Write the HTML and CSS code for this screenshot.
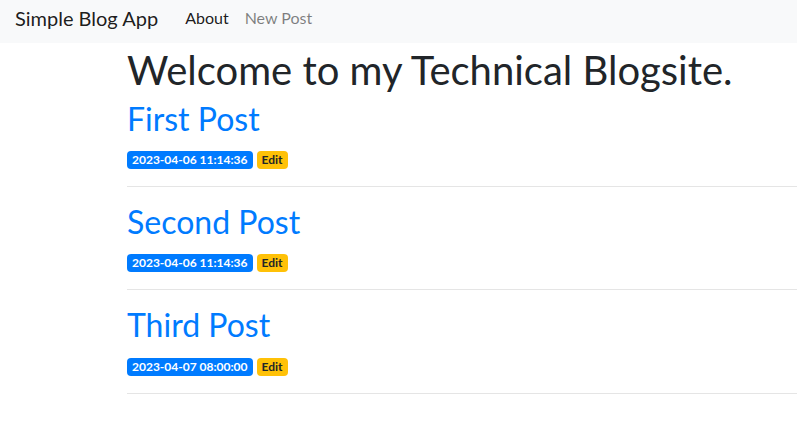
FILE: index.html
```html
<!DOCTYPE html>
<html lang="en">
<head>
<meta charset="utf-8">
<title>Simple Blog App</title>
<link rel="stylesheet" href="styles.css">
</head>
<body>
<nav class="navbar">
  <a class="brand" href="#">Simple Blog App</a>
  <ul class="nav">
    <li><a class="nav-link active" href="#">About</a></li>
    <li><a class="nav-link" href="#">New Post</a></li>
  </ul>
</nav>
<main class="content">
  <h1 class="title">Welcome to my Technical Blogsite.</h1>
  <article class="post">
    <h2 class="post-title"><a href="#">First Post</a></h2>
    <div class="meta">
      <span class="badge badge-primary">2023-04-06 11:14:36</span>
      <a class="badge badge-warning" href="#">Edit</a>
    </div>
  </article>
  <hr class="divider">
  <article class="post">
    <h2 class="post-title"><a href="#">Second Post</a></h2>
    <div class="meta">
      <span class="badge badge-primary">2023-04-06 11:14:36</span>
      <a class="badge badge-warning" href="#">Edit</a>
    </div>
  </article>
  <hr class="divider">
  <article class="post">
    <h2 class="post-title"><a href="#">Third Post</a></h2>
    <div class="meta">
      <span class="badge badge-primary">2023-04-07 08:00:00</span>
      <a class="badge badge-warning" href="#">Edit</a>
    </div>
  </article>
  <hr class="divider">
</main>
</body>
</html>
```
FILE: styles.css
```css
* { box-sizing: border-box; }
html, body { margin: 0; padding: 0; }
body {
  font-family: "Lato", "Noto Sans", sans-serif;
  font-size: 16px;
  line-height: 1.5;
  color: #212529;
  background: #fff;
}
a { text-decoration: none; }

.navbar {
  display: flex;
  align-items: center;
  height: 43px;
  padding: 3px 16px 10px 15px;
  background: #f8f9fa;
}
.brand {
  font-size: 20px;
  line-height: 30px;
  color: rgba(0, 0, 0, 0.9);
  margin-right: 19px;
}
.nav {
  display: flex;
  list-style: none;
  margin: 0;
  padding: 0;
}
.nav-link {
  display: block;
  padding: 0 8px;
  font-size: 16px;
  line-height: 24px;
  color: rgba(0, 0, 0, 0.5);
}
.nav-link.active { color: rgba(0, 0, 0, 0.9); }

.content {
  padding: 2.5px 0 0 127px;
}
.title {
  margin: 0 0 6px;
  font-size: 40px;
  font-weight: 400;
  line-height: 48px;
  color: #212529;
}
.post-title {
  margin: 0;
  font-size: 32px;
  font-weight: 400;
  line-height: 38.4px;
}
.post-title a { color: #007bff; }
.meta {
  display: flex;
  gap: 4px;
  margin-top: 13px;
}
.badge {
  display: inline-block;
  padding: 3px 5px;
  font-size: 12px;
  font-weight: 700;
  line-height: 12px;
  border-radius: 4px;
  white-space: nowrap;
}
.badge-primary { background: #007bff; color: #fff; }
.badge-warning { background: #ffc107; color: #212529; }
.divider {
  margin: 17px 0 16px;
  border: 0;
  border-top: 1px solid rgba(0, 0, 0, 0.1);
  height: 0;
}
```
